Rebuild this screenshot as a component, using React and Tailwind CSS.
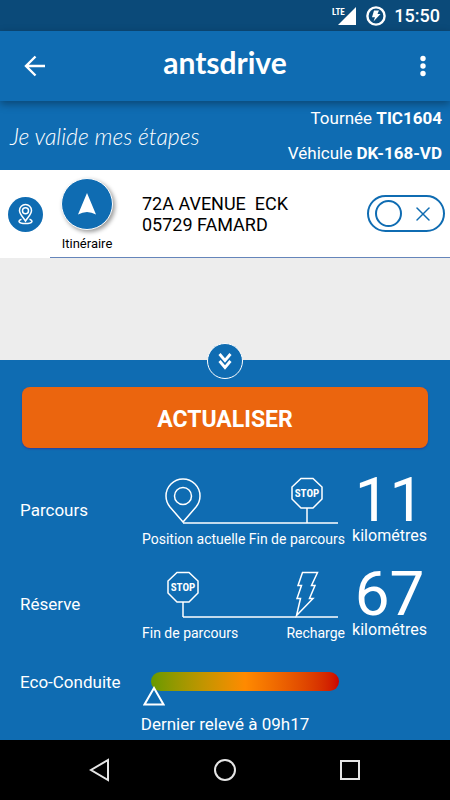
import React from 'react'
import { X } from 'lucide-react'

function StopSign({ x }) {
  return (
    <g transform={`translate(${x} 0)`}>
      <path d="M-6 1.5H6L15 10V22L6 31H-6L-15 22V10Z" />
      <path d="M0 31V46" />
      <text
        x="0"
        y="20"
        textAnchor="middle"
        fill="white"
        stroke="none"
        className="font-['Roboto_Condensed','Roboto'] text-[11px] font-bold"
      >
        STOP
      </text>
    </g>
  )
}

function StatusBar() {
  return (
    <div className="flex h-[31px] items-center justify-end bg-[#0b4a79] pr-2.5">
      <svg width="26" height="22" viewBox="0 0 26 22" fill="white" className="mr-2">
        <path d="M24 2V20H6Z" />
        <text x="0" y="10" className="font-['Roboto_Condensed','Roboto'] text-[9px] font-bold">LTE</text>
      </svg>
      <svg width="20" height="20" viewBox="0 0 20 20" className="mr-2">
        <circle cx="10" cy="10" r="8.6" fill="none" stroke="white" strokeWidth="2.4" />
        <path d="M8 4.5H13L11.5 8H14.5L7.5 15.5L9 11.3H6Z" fill="white" />
      </svg>
      <span className="text-[18px] font-medium leading-6">15:50</span>
    </div>
  )
}

function AppBar() {
  return (
    <header className="relative grid h-[70px] grid-cols-[1fr_auto_1fr] items-center bg-[#0f6cb2] px-[22px] shadow-[0_3px_8px_rgba(0,0,0,0.35)]">
      <button aria-label="Retour" className="justify-self-start">
        <svg width="26" height="26" viewBox="0 0 26 26" fill="none" stroke="white" strokeWidth="2.4">
          <path d="M23 13H5M13.5 3.5L4 13L13.5 22.5" />
        </svg>
      </button>
      <h1 className="pb-2 text-[30px] font-bold leading-8 font-['Lato']">antsdrive</h1>
      <button aria-label="Menu" className="justify-self-end px-0.5">
        <svg width="6" height="22" viewBox="0 0 6 22" fill="white">
          <circle cx="3" cy="3.5" r="2.7" />
          <circle cx="3" cy="11" r="2.7" />
          <circle cx="3" cy="18.5" r="2.7" />
        </svg>
      </button>
    </header>
  )
}

function Step() {
  return (
    <div className="flex h-[88px] bg-white text-black">
      <div className="flex w-[50px] items-center justify-center">
        <svg width="35" height="35" viewBox="0 0 35 35" fill="none" stroke="white" strokeWidth="1.5">
          <circle cx="17.5" cy="17.5" r="17.5" fill="#0f6cb2" stroke="none" />
          <path d="M17.5 24C15 20 11.5 17 11.5 13.5A6 6 0 0 1 23.5 13.5C23.5 17 20 20 17.5 24Z" />
          <circle cx="17.5" cy="13.7" r="3" />
          <path d="M13.5 22.2C9.5 23.5 10 26.5 17.5 26.5S25.5 23.5 21.5 22.2" />
        </svg>
      </div>
      <div className="flex flex-1 items-center border-b border-[#6585ba]">
        <button className="flex w-[74px] flex-col items-center gap-1 pt-1">
          <span className="flex size-[52px] items-center justify-center rounded-full border border-white bg-[#0f6cb2] shadow-[2px_2px_4px_rgba(0,0,0,0.4)]">
            <svg width="18" height="22" viewBox="0 0 18 22" fill="white">
              <path d="M9 0L18 21.5Q9 16.5 0 21.5Z" />
            </svg>
          </span>
          <span className="text-[13px] leading-5">Itinéraire</span>
        </button>
        <p className="flex-1 whitespace-pre pl-[18px] text-[18px] leading-[21px]">
          {'72A AVENUE  ECK\n05729 FAMARD'}
        </p>
        <label className="mr-[5px] flex h-[37px] w-[78px] items-center justify-between rounded-full border-2 border-[#0f6cb2] pl-1.5 pr-2 text-[#0f6cb2]">
          <input
            type="checkbox"
            aria-label="Valider l'étape"
            className="size-[27px] appearance-none rounded-full border-2 border-[#0f6cb2]"
          />
          <X size={24} strokeWidth={1.5} />
        </label>
      </div>
    </div>
  )
}

function Distance({ title, from, to, value, children }) {
  return (
    <div className="flex h-[94px] pl-5 pr-4">
      <h2 className="w-[122px] pt-[21px] text-[17px] leading-6">{title}</h2>
      <div className="w-[203px]">
        <svg width="200" height="48" viewBox="0 0 200 48" fill="none" stroke="white" strokeWidth="1.5">
          {children}
          <path d="M41 46H196" />
        </svg>
        <div className="mt-1 flex justify-between whitespace-nowrap text-[14px] leading-5">
          <span>{from}</span>
          <span>{to}</span>
        </div>
      </div>
      <p className="flex flex-1 flex-col items-center gap-[3px]">
        <span className="text-[62px] leading-[46px]">{value}</span>
        <span className="text-[16px] leading-5">kilométres</span>
      </p>
    </div>
  )
}

function App() {
  return (
    <div className="flex min-h-screen flex-col bg-[#ededed] text-white font-['Roboto',sans-serif]">
      <StatusBar />
      <AppBar />

      <div className="flex h-[69px] items-center justify-between bg-[#0f6cb2] pl-2.5 pr-2">
        <h2 className="text-[23px] font-light italic leading-7 font-['Lato']">Je valide mes étapes</h2>
        <div className="text-right text-[17px] leading-[35px]">
          <p>Tournée <b>TIC1604</b></p>
          <p>Véhicule <b>DK-168-VD</b></p>
        </div>
      </div>

      <main className="flex flex-1 flex-col">
        <Step />
        <div className="flex-1" />

        <section className="relative bg-[#0f6cb2] pt-[27px]">
          <button
            aria-label="Réduire"
            className="absolute -top-[17px] left-1/2 flex size-9 -translate-x-1/2 items-center justify-center rounded-full border border-white bg-[#0f6cb2]"
          >
            <svg width="14" height="18" viewBox="0 0 14 18" fill="none" stroke="white" strokeWidth="2.8">
              <path d="M1.5 2L7 8.5L12.5 2M1.5 9L7 15.5L12.5 9" />
            </svg>
          </button>

          <div className="mb-[29px] px-[22px]">
            <button className="h-[61px] w-full rounded-lg bg-[#eb650e] pt-1.5 text-[23px] font-bold shadow-[0_1px_2px_#2a3c9c]">
              ACTUALISER
            </button>
          </div>

          <Distance title="Parcours" from="Position actuelle" to="Fin de parcours" value="11">
            <path d="M41 45L28 30Q24 25 24 19A17 17 0 0 1 58 19Q58 25 54 30Z" />
            <circle cx="41" cy="19" r="8.5" />
            <StopSign x={165} />
          </Distance>
          <Distance title="Réserve" from="Fin de parcours" to="Recharge" value="67">
            <StopSign x={41} />
            <path d="M160.5 1.5H175.5L169.5 14.5H173L167.5 27.5H171L154.5 44.5L158.5 27.5H155L159.5 14.5H156Z" />
          </Distance>

          <div className="flex h-[47px] pl-5 pr-3">
            <h2 className="w-[131px] pt-[5px] text-[17px] leading-6">Eco-Conduite</h2>
            <div className="relative mt-[7px] h-[19px] w-[188px] rounded-full bg-linear-to-r from-[#669900] via-[#ff8a00] to-[#cc0000]">
              <svg width="22" height="20" viewBox="0 0 22 20" className="absolute -left-2 top-3.5">
                <path d="M11 2L20.5 18.5H1.5Z" fill="#0f6cb2" stroke="white" strokeWidth="2" />
              </svg>
            </div>
          </div>
          <p className="pb-1 text-center text-[17px] leading-6">Dernier relevé à 09h17</p>
        </section>
      </main>

      <nav className="flex h-[60px] items-center justify-center gap-[101px] bg-black">
        <button aria-label="Précédent">
          <svg width="24" height="24" viewBox="0 0 24 24" fill="none" stroke="#e5e5e5" strokeWidth="2">
            <path d="M20 2V22L3 12Z" />
          </svg>
        </button>
        <button aria-label="Accueil">
          <svg width="24" height="24" viewBox="0 0 24 24" fill="none" stroke="#e5e5e5" strokeWidth="2">
            <circle cx="12" cy="12" r="10" />
          </svg>
        </button>
        <button aria-label="Applications">
          <svg width="24" height="24" viewBox="0 0 24 24" fill="none" stroke="#e5e5e5" strokeWidth="2">
            <path d="M3 3H21V21H3Z" />
          </svg>
        </button>
      </nav>
    </div>
  )
}

export default App
